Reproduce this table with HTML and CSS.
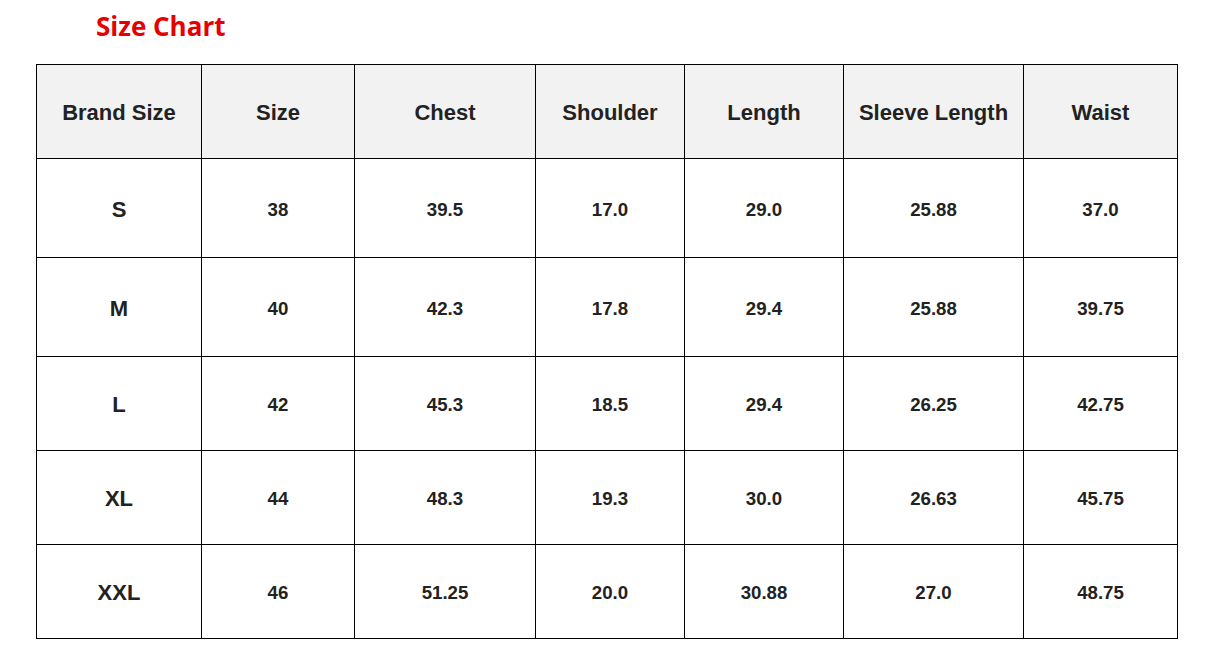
FILE: index.html
```html
<!DOCTYPE html>
<html>
<head>
<meta charset="utf-8">
<link rel="stylesheet" href="styles.css">
</head>
<body>
<h1 class="title">Size Chart</h1>
<table class="chart">
  <colgroup>
    <col class="c1"><col class="c2"><col class="c3"><col class="c4"><col class="c5"><col class="c6"><col class="c7">
  </colgroup>
  <thead>
    <tr class="head"><th>Brand Size</th><th>Size</th><th>Chest</th><th>Shoulder</th><th>Length</th><th>Sleeve Length</th><th>Waist</th></tr>
  </thead>
  <tbody>
    <tr class="tall"><td class="brand">S</td><td>38</td><td>39.5</td><td>17.0</td><td>29.0</td><td>25.88</td><td>37.0</td></tr>
    <tr class="tall"><td class="brand">M</td><td>40</td><td>42.3</td><td>17.8</td><td>29.4</td><td>25.88</td><td>39.75</td></tr>
    <tr class="row"><td class="brand">L</td><td>42</td><td>45.3</td><td>18.5</td><td>29.4</td><td>26.25</td><td>42.75</td></tr>
    <tr class="row"><td class="brand">XL</td><td>44</td><td>48.3</td><td>19.3</td><td>30.0</td><td>26.63</td><td>45.75</td></tr>
    <tr class="row"><td class="brand">XXL</td><td>46</td><td>51.25</td><td>20.0</td><td>30.88</td><td>27.0</td><td>48.75</td></tr>
  </tbody>
</table>
</body>
</html>
```
FILE: styles.css
```css
html, body {
  margin: 0;
  padding: 0;
  background: #ffffff;
}
body {
  padding: 6px 0 0 36px;
  font-family: "Liberation Sans", Arial, sans-serif;
}
.title {
  margin: 0 0 18px 60px;
  font-family: "Open Sans", sans-serif;
  font-weight: 700;
  font-size: 26px;
  line-height: 40px;
  color: #e60000;
}
.chart {
  border-collapse: collapse;
  table-layout: fixed;
  width: 1141px;
  color: #222222;
}
.c1 { width: 165px; }
.c2 { width: 153px; }
.c3 { width: 181px; }
.c4 { width: 149px; }
.c5 { width: 159px; }
.c6 { width: 180px; }
.c7 { width: 154px; }
.chart th, .chart td {
  border: 1px solid #000000;
  text-align: center;
  vertical-align: middle;
  padding: 3px 0 0 0;
  font-weight: 700;
  font-size: 18.67px;
}
.chart th {
  background: #f2f2f2;
  font-size: 22px;
}
.chart td.brand {
  font-size: 22px;
}
.head { height: 94px; }
.tall { height: 99px; }
.row { height: 94px; }
```
